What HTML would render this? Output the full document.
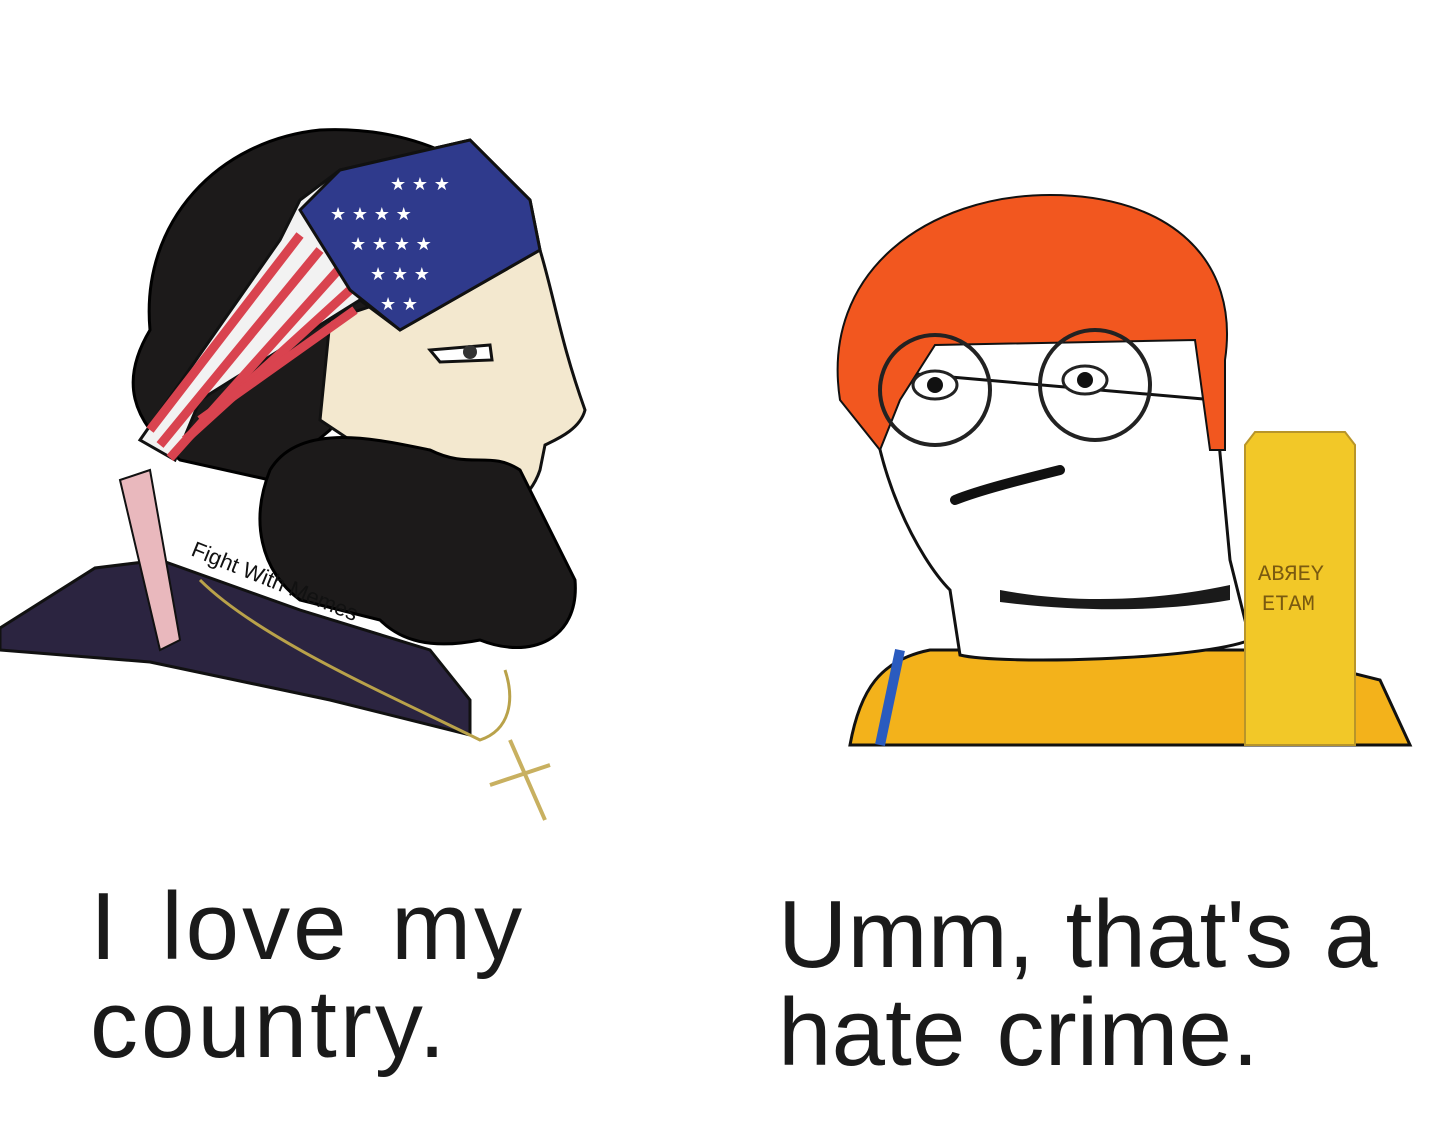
<!DOCTYPE html>
<html><head><meta charset="utf-8"><style>
html,body{margin:0;padding:0;background:#fff;width:1440px;height:1143px;overflow:hidden}
.t{position:absolute;font-family:"Liberation Sans",sans-serif;font-size:96px;color:#1a1a1a;line-height:98px;white-space:nowrap}
</style></head><body>
<svg width="1440" height="1143" style="position:absolute;left:0;top:0">
<path d="M0,628 L95,568 L160,560 L300,610 L430,650 L470,700 L470,735 L330,700 L150,662 L0,650 Z" fill="#2b2440" stroke="#111" stroke-width="3"/>
<path d="M150,330 C140,220 220,140 320,130 C420,125 500,170 530,230 L500,300 L400,330 L330,430 L270,480 L180,460 C130,420 120,380 150,330 Z" fill="#1c1a1a" stroke="#000" stroke-width="3"/>
<path d="M330,320 L540,250 C555,300 560,340 585,410 C580,430 555,440 545,445 L540,470 C530,500 500,520 470,520 L380,460 L320,420 Z" fill="#f3e8cf" stroke="#111" stroke-width="3"/>
<path d="M270,470 C300,420 380,440 430,450 C470,470 490,450 520,470 C540,510 555,540 575,580 C580,640 530,660 480,640 C430,650 400,640 380,620 L300,600 C260,570 250,520 270,470 Z" fill="#1c1a1a" stroke="#000" stroke-width="3"/>
<path d="M140,440 L280,240 L300,200 L340,170 L470,140 L530,200 L540,250 L400,330 L360,300 L200,400 L175,460 Z" fill="#f2f2f2" stroke="#111" stroke-width="3"/>
<g stroke="#d9434f" stroke-width="9">
<line x1="150" y1="430" x2="300" y2="235"/><line x1="160" y1="445" x2="320" y2="250"/><line x1="170" y1="458" x2="340" y2="268"/><line x1="185" y1="440" x2="350" y2="290"/><line x1="200" y1="420" x2="355" y2="310"/>
</g>
<path d="M300,210 L340,170 L470,140 L530,200 L540,250 L400,330 L350,290 Z" fill="#2f3a8c" stroke="#111" stroke-width="3"/>
<g fill="#fff" font-size="18" font-family="DejaVu Sans">
<text x="330" y="220">★ ★ ★ ★</text><text x="350" y="250">★ ★ ★ ★</text><text x="370" y="280">★ ★ ★</text><text x="380" y="310">★ ★</text><text x="390" y="190">★ ★ ★</text>
</g>
<path d="M120,480 L150,470 L180,640 L160,650 Z" fill="#e9b8bd" stroke="#111" stroke-width="2"/>
<path d="M430,350 L490,345 L492,360 L440,362 Z" fill="#fff" stroke="#111" stroke-width="3"/>
<circle cx="470" cy="352" r="7" fill="#333"/>
<text x="190" y="555" font-family="Liberation Sans" font-size="22" fill="#111" transform="rotate(22 190 555)">Fight With Memes</text>
<path d="M200,580 C260,640 400,700 480,740 C510,730 515,700 505,670" fill="none" stroke="#b9a24a" stroke-width="3"/>
<path d="M510,740 L545,820 M490,785 L550,765" stroke="#c8b060" stroke-width="4"/>
<path d="M850,745 C860,690 880,660 930,650 L1260,650 L1380,680 L1410,745 Z" fill="#f3b21b" stroke="#111" stroke-width="3"/>
<path d="M900,650 L880,745" stroke="#2a5bbf" stroke-width="10"/>
<path d="M870,370 C870,470 920,560 950,590 L960,655 C1000,665 1200,660 1250,640 L1230,560 L1215,400 Z" fill="#fff" stroke="#111" stroke-width="3"/>
<path d="M1000,590 C1080,605 1160,600 1230,585 L1230,600 C1160,612 1080,612 1000,602 Z" fill="#1a1a1a"/>
<path d="M840,400 C820,270 930,195 1050,195 C1170,195 1240,260 1225,360 L1225,450 L1210,450 L1195,340 L935,345 L900,400 L880,450 Z" fill="#f2571f" stroke="#111" stroke-width="2"/>
<circle cx="935" cy="390" r="55" fill="none" stroke="#222" stroke-width="4"/>
<circle cx="1095" cy="385" r="55" fill="none" stroke="#222" stroke-width="4"/>
<ellipse cx="935" cy="385" rx="22" ry="14" fill="#fff" stroke="#222" stroke-width="3"/><circle cx="935" cy="385" r="8" fill="#111"/>
<ellipse cx="1085" cy="380" rx="22" ry="14" fill="#fff" stroke="#222" stroke-width="3"/><circle cx="1085" cy="380" r="8" fill="#111"/>
<path d="M955,500 C980,490 1020,480 1060,470" fill="none" stroke="#111" stroke-width="10" stroke-linecap="round"/>
<path d="M1245,445 L1255,432 L1345,432 L1355,445 L1355,745 L1245,745 Z" fill="#f2c828" stroke="#b8952a" stroke-width="2"/>
<text x="1258" y="580" font-family="Liberation Mono" font-size="22" fill="#7a5a10">ABЯEY</text>
<text x="1262" y="610" font-family="Liberation Mono" font-size="22" fill="#7a5a10">ETAM</text>
</svg>
<div class="t" style="left:90px;top:878px;letter-spacing:3px;word-spacing:12px">I love my<br>country.</div>
<div class="t" style="left:778px;top:886px;letter-spacing:0.2px;word-spacing:4px">Umm, that's a<br>hate crime.</div>
</body></html>
